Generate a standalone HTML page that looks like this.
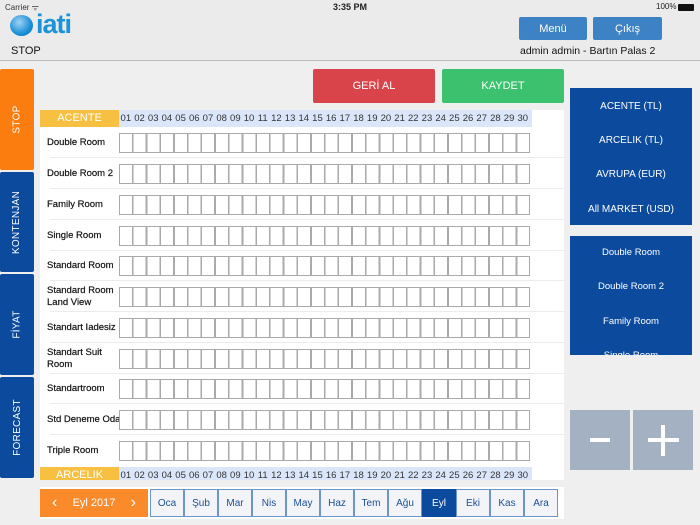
<!DOCTYPE html>
<html><head><meta charset="utf-8"><style>
*{margin:0;padding:0;box-sizing:border-box}
body{width:700px;height:525px;overflow:hidden;background:#efefef;font-family:"Liberation Sans",sans-serif;position:relative;color:#222}
.a{position:absolute}
.hdr{left:0;top:0;width:700px;height:61px;background:#ebebeb;border-bottom:1px solid #bdbdbd}
.tab{left:0;width:34px;color:#fff;font-size:10px;display:flex;align-items:center;justify-content:center;border-radius:2px}
.tab span{transform:rotate(-90deg);white-space:nowrap;letter-spacing:.3px}
.btn{color:#fff;font-size:11px;display:flex;align-items:center;justify-content:center;border-radius:2px}
.panel{left:40px;top:110px;width:524px;height:370px;background:#fff;overflow:hidden}
.days{position:absolute;left:79px;width:413px;height:17px;background:#dbe6fb;display:flex;font-size:9.5px;align-items:center}
.days b{font-weight:normal;width:13.7px;text-align:center;color:#333}
.yel{position:absolute;left:0;width:79px;height:17px;background:#f8c040;color:#fff;font-size:11px;text-align:center;line-height:17px}
.row{position:absolute;left:0;width:524px;height:31px}
.row .l{position:absolute;left:7px;top:0;height:31px;display:flex;align-items:center;font-size:9.5px;line-height:12px;color:#111;width:80px;-webkit-text-stroke:.2px #111}
.row .c{position:absolute;left:79px;top:6px;width:411px;height:20px;border:1.5px solid #aaa;background:repeating-linear-gradient(to right,#fff 0 12px,#aaa 12px 13.7px)}
.row .s{position:absolute;left:10px;right:0;top:30px;height:1px;background:#ececec}
.mon{top:489px;height:28px;width:34px;border:1.5px solid #6e95c8;background:#f2f4f8;color:#1b4f95;font-size:10px;display:flex;align-items:center;justify-content:center}
.rb{color:#fff;font-size:10px;text-align:center;position:absolute;left:0;width:122px}
</style></head><body>
<div class="a hdr"></div>
<div class="a" style="left:5px;top:2px;font-size:8px;color:#333">Carrier ᯤ</div>
<div class="a" style="left:333px;top:2px;font-size:9px;font-weight:bold;color:#222">3:35 PM</div>
<div class="a" style="left:656px;top:2px;font-size:8px;color:#222">100%</div>
<div class="a" style="left:678px;top:4px;width:16px;height:7px;background:#111;border-radius:1px"></div>
<div class="a" style="left:10px;top:15px;width:23px;height:21px;border-radius:50%;background:radial-gradient(circle at 40% 35%,#9fd3f3,#1a8fd8 60%,#0d6bb0)"></div>
<div class="a" style="left:36px;top:9px;font-size:27px;font-weight:bold;color:#1b93d9;letter-spacing:-1px">iati</div>
<div class="a" style="left:11px;top:45px;font-size:11px;color:#111">STOP</div>
<div class="a btn" style="left:519px;top:17px;width:68px;height:23px;background:#3d82c5">Menü</div>
<div class="a btn" style="left:593px;top:17px;width:69px;height:23px;background:#3d82c5">Çıkış</div>
<div class="a" style="left:520px;top:45px;font-size:10.5px;color:#111">admin admin - Bartın Palas 2</div>

<div class="a tab" style="top:69px;height:101px;background:#fb7d10"><span>STOP</span></div>
<div class="a tab" style="top:172px;height:100px;background:#0b4a9c"><span>KONTENJAN</span></div>
<div class="a tab" style="top:274px;height:101px;background:#0b4a9c"><span>FİYAT</span></div>
<div class="a tab" style="top:377px;height:101px;background:#0b4a9c"><span>FORECAST</span></div>

<div class="a btn" style="left:313px;top:69px;width:122px;height:34px;background:#d9444a">GERİ AL</div>
<div class="a btn" style="left:442px;top:69px;width:122px;height:34px;background:#3cc26e">KAYDET</div>

<div class="a panel">
<div class="yel" style="top:0">ACENTE</div>
<div class="days" style="top:0"><b>01</b><b>02</b><b>03</b><b>04</b><b>05</b><b>06</b><b>07</b><b>08</b><b>09</b><b>10</b><b>11</b><b>12</b><b>13</b><b>14</b><b>15</b><b>16</b><b>17</b><b>18</b><b>19</b><b>20</b><b>21</b><b>22</b><b>23</b><b>24</b><b>25</b><b>26</b><b>27</b><b>28</b><b>29</b><b>30</b></div>
<div class="row" style="top:17px"><div class="l">Double Room</div><div class="c"></div><div class="s"></div></div>
<div class="row" style="top:48px"><div class="l">Double Room 2</div><div class="c"></div><div class="s"></div></div>
<div class="row" style="top:79px"><div class="l">Family Room</div><div class="c"></div><div class="s"></div></div>
<div class="row" style="top:110px"><div class="l">Single Room</div><div class="c"></div><div class="s"></div></div>
<div class="row" style="top:140px"><div class="l">Standard Room</div><div class="c"></div><div class="s"></div></div>
<div class="row" style="top:171px"><div class="l">Standard Room<br>Land View</div><div class="c"></div><div class="s"></div></div>
<div class="row" style="top:202px"><div class="l">Standart Iadesiz</div><div class="c"></div><div class="s"></div></div>
<div class="row" style="top:233px"><div class="l">Standart Suit<br>Room</div><div class="c"></div><div class="s"></div></div>
<div class="row" style="top:263px"><div class="l">Standartroom</div><div class="c"></div><div class="s"></div></div>
<div class="row" style="top:294px"><div class="l" style="width:120px">Std Deneme Oda</div><div class="c"></div><div class="s"></div></div>
<div class="row" style="top:325px"><div class="l">Triple Room</div><div class="c"></div></div>
<div class="yel" style="top:357px">ARCELIK</div>
<div class="days" style="top:357px"><b>01</b><b>02</b><b>03</b><b>04</b><b>05</b><b>06</b><b>07</b><b>08</b><b>09</b><b>10</b><b>11</b><b>12</b><b>13</b><b>14</b><b>15</b><b>16</b><b>17</b><b>18</b><b>19</b><b>20</b><b>21</b><b>22</b><b>23</b><b>24</b><b>25</b><b>26</b><b>27</b><b>28</b><b>29</b><b>30</b></div>
</div>

<div class="a" style="left:40px;top:487px;width:524px;height:32px;background:#fff"></div>
<div class="a" style="left:40px;top:489px;width:108px;height:28px;background:#fb8a2a;color:#fff;font-size:11px;display:flex;align-items:center;justify-content:space-between;padding:0 12px"><span style="font-size:16px">‹</span><span>Eyl 2017</span><span style="font-size:16px">›</span></div>
<div class="a mon" style="left:150px">Oca</div>
<div class="a mon" style="left:184px">Şub</div>
<div class="a mon" style="left:218px">Mar</div>
<div class="a mon" style="left:252px">Nis</div>
<div class="a mon" style="left:286px">May</div>
<div class="a mon" style="left:320px">Haz</div>
<div class="a mon" style="left:354px">Tem</div>
<div class="a mon" style="left:388px">Ağu</div>
<div class="a mon" style="left:422px;background:#0b4a9c;color:#fff;border-color:#0b4a9c">Eyl</div>
<div class="a mon" style="left:456px">Eki</div>
<div class="a mon" style="left:490px">Kas</div>
<div class="a mon" style="left:524px">Ara</div>

<div class="a" style="left:570px;top:88px;width:122px;height:137px;background:#0b4a9c">
<div class="rb" style="top:13px">ACENTE (TL)</div>
<div class="rb" style="top:47px">ARCELIK (TL)</div>
<div class="rb" style="top:81px">AVRUPA (EUR)</div>
<div class="rb" style="top:116px">All MARKET (USD)</div>
</div>
<div class="a" style="left:570px;top:236px;width:122px;height:119px;background:#0b4a9c;overflow:hidden">
<div class="rb" style="top:11px;font-size:9.5px">Double Room</div>
<div class="rb" style="top:45px;font-size:9.5px">Double Room 2</div>
<div class="rb" style="top:80px;font-size:9.5px">Family Room</div>
<div class="rb" style="top:114px;font-size:9.5px">Single Room</div>
</div>
<div class="a" style="left:570px;top:410px;width:60px;height:60px;background:#a3b1c2"><div class="a" style="left:20px;top:28px;width:20px;height:4px;background:#fff"></div></div>
<div class="a" style="left:633px;top:410px;width:60px;height:60px;background:#a3b1c2"><div class="a" style="left:15px;top:28px;width:31px;height:4px;background:#fff"></div><div class="a" style="left:28px;top:15px;width:4px;height:31px;background:#fff"></div></div>
</body></html>
